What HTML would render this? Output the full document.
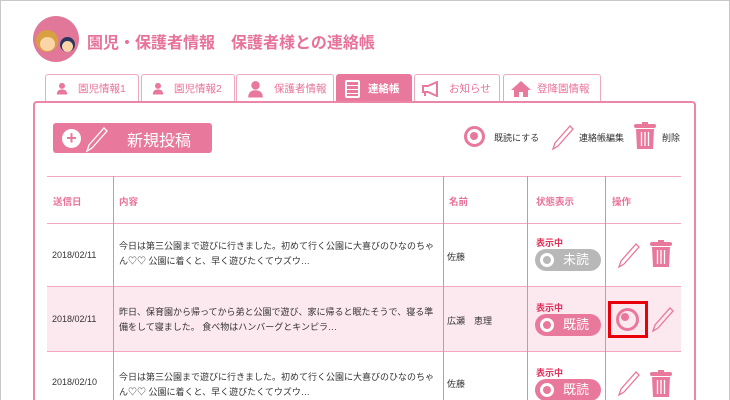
<!DOCTYPE html><html><head><meta charset="utf-8"><style>
*{box-sizing:border-box;margin:0;padding:0}
html{width:730px;height:400px;overflow:hidden}
body{width:730px;height:400px;overflow:hidden;background:#fff;font-family:"Liberation Sans","Noto Sans CJK JP",sans-serif;position:relative}
.frame{position:absolute;left:0;top:0;width:730px;height:400px;border:1px solid #c8c8c8;border-bottom:none}
.abs{position:absolute}
.tab{position:absolute;top:74px;height:28px;border:1px solid #f0a8c0;border-bottom:none;border-radius:3px 3px 0 0;background:#fff;color:#e8739a;font-size:10.5px;line-height:26px;padding-left:10px;display:flex;align-items:center;gap:10px}
.tab.on{background:#e8799c;color:#fff;border-color:#e8799c;font-weight:bold}
.panel{position:absolute;left:33px;top:101px;width:663px;height:299px;border:2px solid #ec86a6;border-bottom:none;border-radius:4px 4px 0 0}
.hl{position:absolute;height:1px;background:#f3a8c0}
.vl{position:absolute;width:1px;background:#ec86a6}
.t{position:absolute;font-size:9px;color:#333}
.h{position:absolute;font-size:9.5px;font-weight:bold;color:#e8739a;top:194px}
.st{position:absolute;font-size:9px;font-weight:bold;color:#e0305a}
.pill{position:absolute;width:66px;height:22px;border-radius:11px;background:#e8799c;color:#fff;font-size:13px;line-height:22px;padding-left:28px}
.pill::before{content:"";position:absolute;left:5px;top:4px;width:8px;height:8px;border-radius:50%;border:3px solid #fff;background:#e8799c}
.pill.g{background:#b8b8b8}.pill.g::before{background:#b8b8b8}
</style></head><body>
<div class="frame"></div>
<div class="abs" style="left:33px;top:16px;width:46px;height:46px;border-radius:50%;background:#e1789a;overflow:hidden">
<div class="abs" style="left:3px;top:14px;width:22px;height:22px;border-radius:50%;background:#d9a040"></div>
<div class="abs" style="left:7px;top:21px;width:15px;height:14px;border-radius:50%;background:#fbd4a8"></div>
<div class="abs" style="left:27px;top:21px;width:15px;height:15px;border-radius:50%;background:#2a3660"></div>
<div class="abs" style="left:29px;top:25px;width:11px;height:11px;border-radius:50%;background:#fbd4a8"></div>
</div>
<div class="abs" style="left:87px;top:29px;font-size:16px;font-weight:bold;color:#e8739a">園児・保護者情報　保護者様との連絡帳</div>

<svg width="0" height="0" style="position:absolute"><defs><symbol id="p" viewBox="0 0 14 14"><circle cx="7" cy="4" r="3.5" fill="#e8799c"/><path d="M1 14 Q1 8 7 8 Q13 8 13 14Z" fill="#e8799c"/></symbol></defs></svg>
<div class="tab" style="left:45px;width:94px"><svg width="12" height="13"><use href="#p"/></svg>園児情報1</div>
<div class="tab" style="left:141px;width:94px"><svg width="12" height="13"><use href="#p"/></svg>園児情報2</div>
<div class="tab" style="left:236px;width:98px"><svg width="17" height="18"><use href="#p"/></svg>保護者情報</div>
<div class="tab on" style="left:336px;width:76px;gap:8px;padding-left:8px"><span style="display:inline-block;width:15px;height:18px;border:2px solid #fff;border-radius:2px;background:repeating-linear-gradient(#e8799c 0 3px,#fff 3px 4px)"></span>連絡帳</div>
<div class="tab" style="left:414px;width:86px;gap:6px;padding-left:6px"><svg width="22" height="16" viewBox="0 0 22 16"><path d="M2 5h5l9-4v14l-9-4H2z M4 11v4" fill="none" stroke="#e8799c" stroke-width="2"/></svg>お知らせ</div>
<div class="tab" style="left:503px;width:98px;gap:6px;padding-left:7px"><svg width="20" height="16" viewBox="0 0 20 16"><path d="M10 0L0 9h3v7h5v-5h4v5h5V9h3z" fill="#e8799c"/></svg>登降園情報</div>

<div class="panel"></div>
<div class="abs" style="left:53px;top:123px;width:159px;height:30px;background:#e8799c;border-radius:3px"></div>
<div class="abs" style="left:62px;top:129px;width:19px;height:19px;border-radius:50%;background:#fff;color:#e8799c;font-weight:bold;font-size:18px;line-height:18px;text-align:center">+</div>
<svg class="abs" style="left:84px;top:125px" width="26" height="28"><path d="M3 26l2-6L20 3l3 3L8 23z" fill="none" stroke="#fff" stroke-width="1.3"/></svg>
<div class="abs" style="left:127px;top:127px;font-size:16px;color:#fff">新規投稿</div>

<div class="abs" style="left:464px;top:126px;width:21px;height:21px;border-radius:50%;border:3px solid #e8799c"></div>
<div class="abs" style="left:470px;top:132px;width:8px;height:8px;border-radius:50%;background:#e8799c"></div>
<div class="t" style="left:494px;top:131px">既読にする</div>
<svg class="abs" style="left:550px;top:123px" width="26" height="28"><path d="M3 26l2-6L20 3l3 3L8 23z" fill="none" stroke="#e8799c" stroke-width="1.3"/></svg>
<div class="t" style="left:579px;top:131px">連絡帳編集</div>
<svg class="abs" style="left:634px;top:122px" width="22" height="28"><rect x="0" y="2" width="22" height="4" rx="2" fill="#e8799c"/><rect x="8" y="0" width="6" height="3" fill="#e8799c"/><path d="M2 7h18l-1 20H3z" fill="#e8799c"/><path d="M7.5 10v14M11 10v14M14.5 10v14" stroke="#fff" stroke-width="1.3"/></svg>
<div class="t" style="left:662px;top:131px">削除</div>

<div class="abs" style="left:47px;top:286px;width:634px;height:65px;background:#fce8ef"></div>
<div class="hl" style="left:47px;width:634px;top:176px"></div>
<div class="hl" style="left:47px;width:634px;top:223px"></div>
<div class="hl" style="left:47px;width:634px;top:286px"></div>
<div class="hl" style="left:47px;width:634px;top:351px"></div>
<div class="vl" style="left:113px;top:176px;height:224px"></div>
<div class="vl" style="left:443px;top:176px;height:224px"></div>
<div class="vl" style="left:527px;top:176px;height:224px"></div>
<div class="vl" style="left:605px;top:176px;height:224px"></div>

<div class="h" style="left:53px">送信日</div><div class="h" style="left:119px">内容</div><div class="h" style="left:449px">名前</div><div class="h" style="left:536px">状態表示</div><div class="h" style="left:612px">操作</div>

<div class="t" style="left:52px;top:250px">2018/02/11</div>
<div class="t" style="left:119px;top:239px;line-height:15px;width:320px">今日は第三公園まで遊びに行きました。初めて行く公園に大喜びのひなのちゃん♡♡ 公園に着くと、早く遊びたくてウズウ…</div>
<div class="t" style="left:447px;top:250px">佐藤</div>
<div class="st" style="left:536px;top:236px">表示中</div>
<div class="pill g" style="left:535px;top:249px">未読</div>
<svg class="abs" style="left:616px;top:241px" width="26" height="28"><path d="M3 26l2-6L20 3l3 3L8 23z" fill="none" stroke="#e8799c" stroke-width="1.3"/></svg>
<svg class="abs" style="left:650px;top:240px" width="22" height="28"><rect x="0" y="2" width="22" height="4" rx="2" fill="#e8799c"/><rect x="8" y="0" width="6" height="3" fill="#e8799c"/><path d="M2 7h18l-1 20H3z" fill="#e8799c"/><path d="M7.5 10v14M11 10v14M14.5 10v14" stroke="#fff" stroke-width="1.3"/></svg>

<div class="t" style="left:52px;top:314px">2018/02/11</div>
<div class="t" style="left:119px;top:305px;line-height:15px;width:320px">昨日、保育園から帰ってから弟と公園で遊び、家に帰ると眠たそうで、寝る準備をして寝ました。 食べ物はハンバーグとキンピラ…</div>
<div class="t" style="left:447px;top:314px">広瀬　恵理</div>
<div class="st" style="left:536px;top:301px">表示中</div>
<div class="pill" style="left:535px;top:314px">既読</div>
<div class="abs" style="left:608px;top:301px;width:40px;height:37px;border:3px solid #e8000a"></div>
<div class="abs" style="left:616px;top:308px;width:23px;height:23px;border-radius:50%;border:3px solid #e8799c"></div>
<div class="abs" style="left:621px;top:313px;width:8px;height:8px;border-radius:50%;background:#e8799c"></div>
<svg class="abs" style="left:650px;top:305px" width="26" height="28"><path d="M3 26l2-6L20 3l3 3L8 23z" fill="none" stroke="#e8799c" stroke-width="1.3"/></svg>

<div class="t" style="left:52px;top:377px">2018/02/10</div>
<div class="t" style="left:119px;top:370px;line-height:15px;width:320px">今日は第三公園まで遊びに行きました。初めて行く公園に大喜びのひなのちゃん♡♡ 公園に着くと、早く遊びたくてウズウ…</div>
<div class="t" style="left:447px;top:377px">佐藤</div>
<div class="st" style="left:536px;top:366px">表示中</div>
<div class="pill" style="left:535px;top:379px">既読</div>
<svg class="abs" style="left:616px;top:369px" width="26" height="28"><path d="M3 26l2-6L20 3l3 3L8 23z" fill="none" stroke="#e8799c" stroke-width="1.3"/></svg>
<svg class="abs" style="left:650px;top:370px" width="22" height="28"><rect x="0" y="2" width="22" height="4" rx="2" fill="#e8799c"/><rect x="8" y="0" width="6" height="3" fill="#e8799c"/><path d="M2 7h18l-1 20H3z" fill="#e8799c"/><path d="M7.5 10v14M11 10v14M14.5 10v14" stroke="#fff" stroke-width="1.3"/></svg>
</body></html>
